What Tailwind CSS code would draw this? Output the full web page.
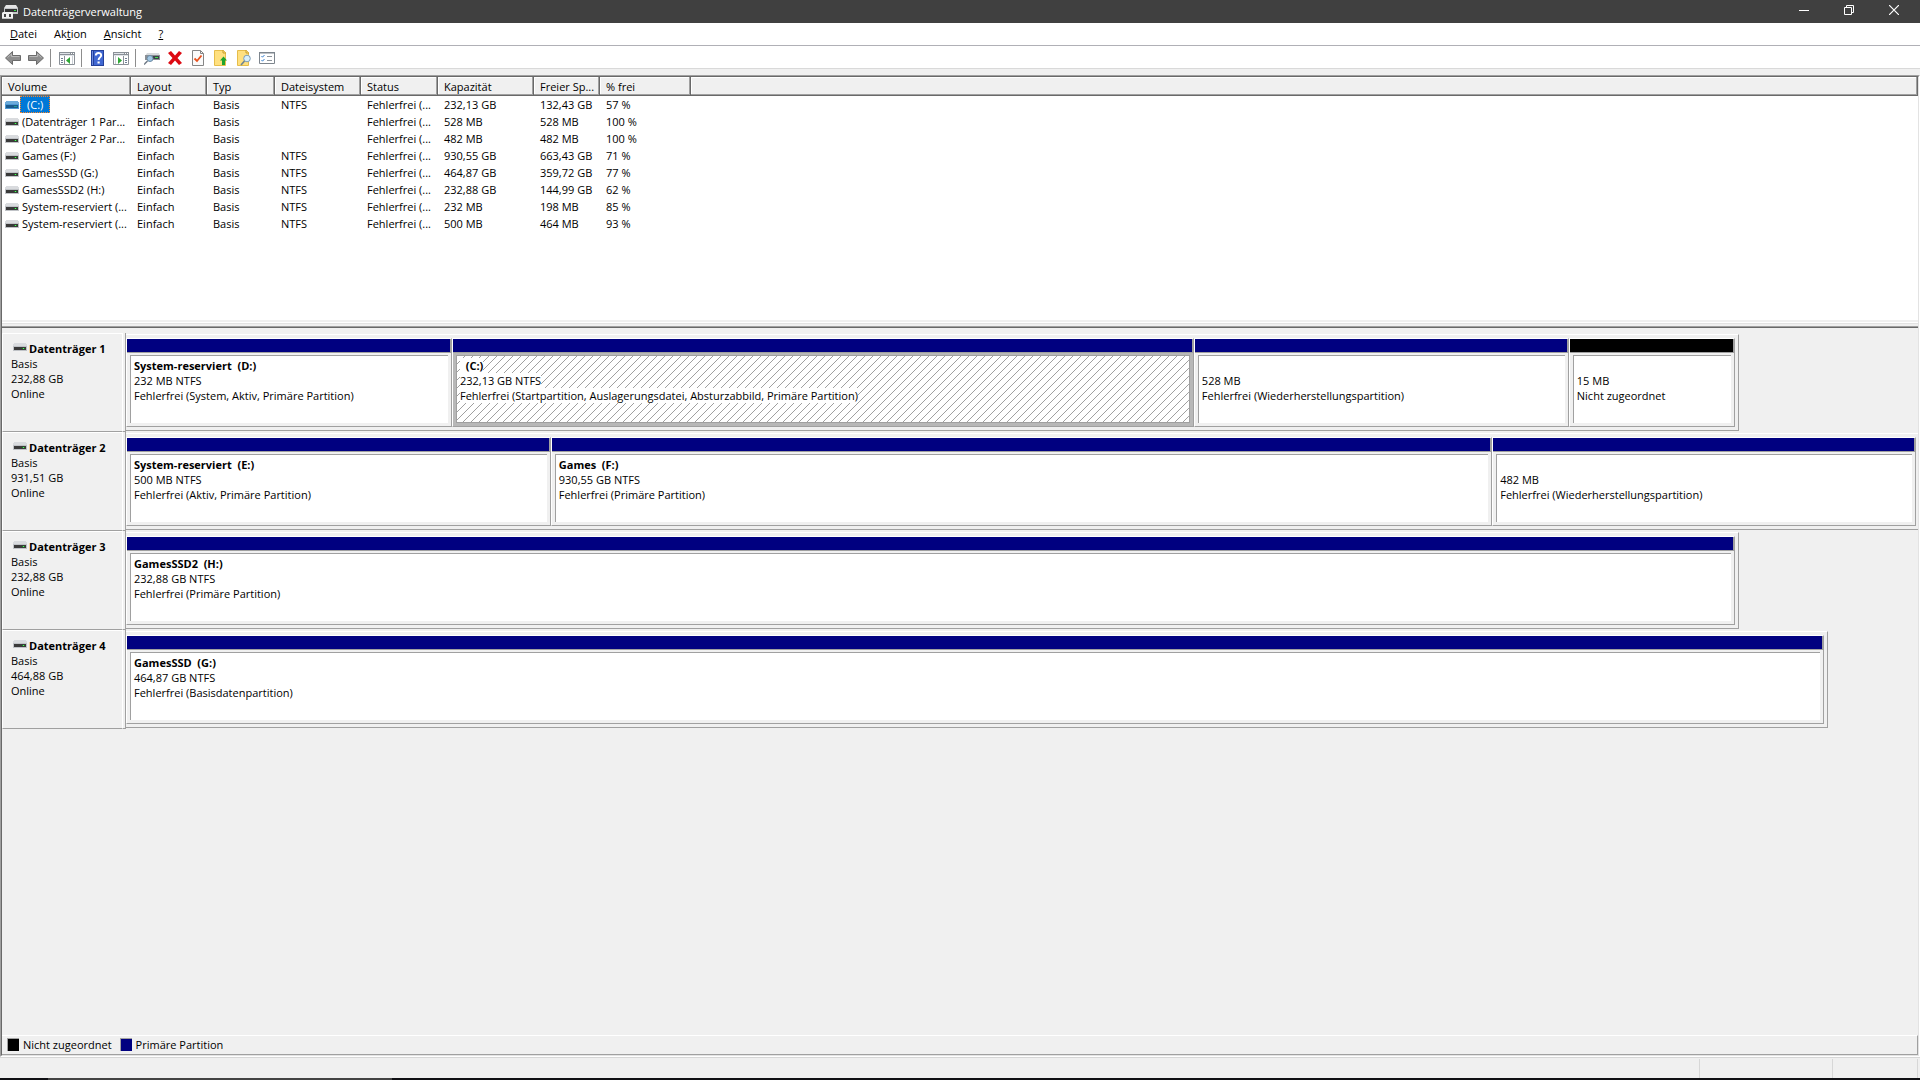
<!DOCTYPE html>
<html lang="de">
<head>
  <meta charset="UTF-8" />
  <meta name="viewport" content="width=device-width, initial-scale=1.0" />
  <script src="https://cdn.jsdelivr.net/npm/@tailwindcss/browser@4"></script>
  <title>Datenträgerverwaltung</title>
</head>
<body class="flex flex-col h-screen overflow-hidden bg-[#f0f0f0] font-['Open_Sans','Noto_Sans',sans-serif] text-[11px] leading-[15px] text-black">

  <!-- Shared drive icons -->
  <svg class="hidden">
    <symbol id="drive" viewBox="0 0 14 8">
      <path d="M1 0h12v1h1v3H0V1h1z" fill="#d9dbde" />
      <rect y="3" width="14" height="5" fill="#c0c3c7" />
      <rect x="1" y="4" width="12" height="3" fill="#3a3a3a" />
      <rect x="9" y="5" width="3" height="1" fill="#1f7a28" />
      <rect x="10" y="5" width="1" height="1" fill="#4dff5e" />
    </symbol>
    <symbol id="drive-selected" viewBox="0 0 14 8">
      <path d="M1 0h12v1h1v3H0V1h1z" fill="#6cabdb" />
      <rect y="3" width="14" height="5" fill="#4f9ad4" />
      <rect x="1" y="4" width="12" height="3" fill="#1c5a8c" />
      <rect x="9" y="5" width="3" height="1" fill="#1fa08f" />
    </symbol>
  </svg>

  <!-- Title bar -->
  <header class="flex items-center h-[23px] shrink-0 bg-[#404040] text-white pl-[2px] pr-1">
    <svg class="w-4 h-4 shrink-0" viewBox="0 0 16 16">
      <path d="M4 1h10l2 3H2z" fill="#e4e4e4" />
      <rect x="2" y="4" width="14" height="6" fill="#c4c6c8" />
      <rect x="3" y="5" width="12" height="3" fill="#333" />
      <rect x="12" y="6" width="2" height="1" fill="#35e04a" />
      <path d="M1 8h9l1 1v6H0V9z" fill="#f0f0f0" />
      <rect x="2" y="10" width="2" height="3" fill="#444" />
      <rect x="7" y="10" width="2" height="3" fill="#444" />
      <rect x="0" y="14" width="11" height="1" fill="#c0c0c0" />
    </svg>
    <h1 class="ml-[5px] flex-1">Datenträgerverwaltung</h1>
    <button aria-label="Minimieren" class="w-[45px] h-full flex justify-center pt-[5px]">
      <svg class="w-[10px] h-[10px]" viewBox="0 0 10 10"><rect y="5" width="10" height="1" fill="#fff" /></svg>
    </button>
    <button aria-label="Verkleinern" class="w-[45px] h-full flex justify-center pt-[5px]">
      <svg class="w-[10px] h-[10px]" viewBox="0 0 10 10" fill="none" stroke="#fff"><path d="M.5 2.500h7v7h-7zM2.500 2.500v-2h7v7h-2" /></svg>
    </button>
    <button aria-label="Schließen" class="w-[45px] h-full flex justify-center pt-[5px]">
      <svg class="w-[10px] h-[10px]" viewBox="0 0 10 10" fill="none" stroke="#fff" stroke-width="1.200"><path d="M0 0l10 10M10 0L0 10" /></svg>
    </button>
  </header>

  <!-- Menu -->
  <nav class="flex items-start gap-px h-[23px] shrink-0 bg-white border-b border-[#b0b0b6] pl-[2px] pt-[3px]">
    <button class="px-2"><u>D</u>atei</button>
    <button class="px-2">Ak<u>t</u>ion</button>
    <button class="px-2"><u>A</u>nsicht</button>
    <button class="px-2"><u>?</u></button>
  </nav>

  <!-- Toolbar -->
  <div role="toolbar" class="flex items-center h-[23px] shrink-0 bg-white border-b border-[#d9d9d9] pl-px pt-[2px] [&>button]:w-[23px] [&>button]:flex [&>button]:justify-center [&_svg]:w-4 [&_svg]:h-4">
    <button aria-label="Zurück">
      <svg viewBox="0 0 16 16"><path d="M.5 8L7.500 1.500v4h8v5h-8v4z" fill="#8e8e8e" stroke="#6b6b6b" /><path d="M2.500 7.500L6.500 4v2.500h8" fill="none" stroke="#b9b9b9" /></svg>
    </button>
    <button aria-label="Vorwärts">
      <svg viewBox="0 0 16 16"><path d="M15.500 8L8.500 1.500v4h-8v5h8v4z" fill="#8e8e8e" stroke="#6b6b6b" /><path d="M13.500 7.500L9.500 4v2.500h-8" fill="none" stroke="#b9b9b9" /></svg>
    </button>
    <div class="w-px h-[18px] bg-[#8d8d8d] ml-[3px] mr-1"></div>
    <button aria-label="Konsolenstruktur ein-/ausblenden">
      <svg viewBox="0 0 16 16"><path d="M.5 2.500h15v12H.5z" fill="#fff" stroke="#8a9097" /><path d="M0 2h16v4H0z" fill="#8a9097" /><path d="M1 3h10v1H1zM1 5h14v1H1z" fill="#dfe3e8" /><path d="M12 3h1v1h-1zM14 3h1v1h-1z" fill="#fff" /><path d="M5.500 6v9" stroke="#8a9097" /><path d="M2 8.500h2M2 10.500h2M2 12.500h2" stroke="#6e7f94" /><path d="M11 7v7L7 10.500z" fill="#2fa836" /><path d="M13.500 6v8" stroke="#c9ced4" /></svg>
    </button>
    <div class="w-px h-[18px] bg-[#8d8d8d] ml-[3px] mr-1"></div>
    <button aria-label="Hilfe">
      <svg viewBox="0 0 16 16"><rect x="1" width="13" height="16" fill="#24409a" /><rect x="4" y="1" width="9" height="14" fill="#4067d2" /><path d="M2.500 1v14" stroke="#6d8be0" /><path d="M5.800 5.500C5.800 2.200 11.200 2.200 11.200 5.300 11.200 7.400 8.600 7.500 8.600 10" fill="none" stroke="#fff" stroke-width="1.900" /><rect x="7.500" y="11.500" width="2.200" height="2" fill="#fff" /></svg>
    </button>
    <button aria-label="Aktionsbereich ein-/ausblenden">
      <svg viewBox="0 0 16 16"><path d="M.5 2.500h15v12H.5z" fill="#fff" stroke="#8a9097" /><path d="M0 2h16v4H0z" fill="#8a9097" /><path d="M1 3h10v1H1zM1 5h14v1H1z" fill="#dfe3e8" /><path d="M12 3h1v1h-1zM14 3h1v1h-1z" fill="#fff" /><path d="M10.500 6v9" stroke="#8a9097" /><path d="M12 8.500h2M12 10.500h2M12 12.500h2" stroke="#6e7f94" /><path d="M5 7v7l4-3.500z" fill="#2fa836" /><path d="M2.500 6v8" stroke="#c9ced4" /></svg>
    </button>
    <div class="w-px h-[18px] bg-[#8d8d8d] ml-[3px] mr-1"></div>
    <button aria-label="Datenträger neu einlesen">
      <svg viewBox="0 0 16 16"><path d="M3 3h12l1 3H1z" fill="#d8dbde" /><rect x="1" y="5" width="15" height="5" fill="#8b9095" /><rect x="8" y="6" width="7" height="3" fill="#3c4248" /><rect x="11" y="7" width="3" height="1" fill="#3fe04f" /><circle cx="6" cy="8.500" r="3" fill="#9fc6e4" stroke="#6c8aa3" /><path d="M3.500 11L0 14.500" stroke="#6b7683" stroke-width="1.500" /></svg>
    </button>
    <button aria-label="Löschen">
      <svg viewBox="0 0 16 16"><path d="M1 3l3-2 4 4.500L12 1l3 2-4.500 5 4.500 5-3 2-4-4.500L4 15l-3-2 4.500-5z" fill="#dd0a12" /></svg>
    </button>
    <button aria-label="Eigenschaften">
      <svg viewBox="0 0 16 16"><path d="M2.500.5h8l3 3v12h-11z" fill="#fafafa" stroke="#858585" /><path d="M10.500.5v3h3" fill="none" stroke="#858585" /><path d="M4.500 8.500L7 11l4.500-5.500" fill="none" stroke="#e8501c" stroke-width="1.800" /></svg>
    </button>
    <button aria-label="Virtuelle Festplatte anfügen">
      <svg viewBox="0 0 16 16"><path d="M1.500.5h9l2 2v13h-11z" fill="#ffe07f" stroke="#e6bd4a" /><path d="M10 0v3h3" fill="none" stroke="#c79d2c" /><path d="M10.500 6.500l3.500 4h-2V15H9v-4.500H7z" fill="#1ea52c" /></svg>
    </button>
    <button aria-label="Suchen">
      <svg viewBox="0 0 16 16"><path d="M1.500.5h9l2 2v13h-11z" fill="#ffe07f" stroke="#e6bd4a" /><path d="M10 0v3h3" fill="none" stroke="#c79d2c" /><circle cx="11" cy="8.500" r="3.300" fill="#d8effb" stroke="#7d9db5" /><path d="M8.500 11L5 15" stroke="#6f8593" stroke-width="1.600" /></svg>
    </button>
    <button aria-label="Einstellungen">
      <svg viewBox="0 0 16 16"><path d="M.5 2.500h15v11H.5z" fill="#fff" stroke="#7d858d" /><path d="M0 2h16v1.500H0z" fill="#7d858d" /><path d="M2.500 6l1 1.200L5.500 5M2.500 10l1 1.200L5.500 9" fill="none" stroke="#3c82cf" /><path d="M8 6.500h5M8 10.500h5" stroke="#8d949b" /></svg>
    </button>
  </div>

  <!-- Sunken frame with volume list, disk view and legend -->
  <main class="flex flex-col flex-1 min-h-0 mt-[6px] border border-t-[#a0a0a0] border-l-[#a0a0a0] border-r-white border-b-white">
    <div class="flex flex-col flex-1 min-h-0 border border-t-[#696969] border-l-[#696969] border-r-[#e3e3e3] border-b-[#e3e3e3]">

      <section class="h-[243px] shrink-0 bg-white overflow-hidden">
        <table class="w-full table-fixed border-collapse text-left whitespace-nowrap">
          <colgroup>
            <col class="w-[129px]" /><col class="w-[76px]" /><col class="w-[68px]" /><col class="w-[86px]" />
            <col class="w-[77px]" /><col class="w-[96px]" /><col class="w-[66px]" /><col class="w-[91px]" /><col />
          </colgroup>
          <thead>
            <tr class="h-[19px] bg-[#f0f0f0] [&>th]:px-[6px] [&>th]:py-0 [&>th]:font-normal [&>th]:shadow-[inset_-1px_-1px_#696969,inset_-2px_-2px_#a0a0a0,inset_1px_1px_#fff]">
              <th>Volume</th><th>Layout</th><th>Typ</th><th>Dateisystem</th><th>Status</th><th>Kapazität</th><th>Freier Sp...</th><th>% frei</th><th></th>
            </tr>
          </thead>
          <tbody id="volumes"></tbody>
        </table>
      </section>

      <div class="h-2 shrink-0 flex flex-col justify-between cursor-row-resize">
        <div class="mt-[2px] h-[2px] bg-[#e3e3e3] border-t border-white"></div>
        <div class="h-[2px] bg-[#696969] border-t border-[#a0a0a0]"></div>
      </div>

      <section id="disks" class="flex-1 min-h-0 pt-[5px]"></section>

      <footer class="flex items-center h-5 shrink-0 border-t border-t-white border-b border-b-[#a0a0a0] border-r border-r-[#a0a0a0] pl-[5px] pb-px">
        <span class="w-3 h-[13px] bg-black border-t border-l border-[#a0a0a0] mr-1"></span>
        <span class="mr-2">Nicht zugeordnet</span>
        <span class="w-3 h-[13px] bg-[#000080] border-t border-l border-[#a0a0a0] mr-1"></span>
        <span>Primäre Partition</span>
      </footer>
    </div>
  </main>

  <!-- Status bar -->
  <div class="flex h-[21px] shrink-0 border-t border-[#d7d7d7] pt-px pr-[2px]">
    <div class="flex-1 border-r border-[#d7d7d7]"></div>
    <div class="w-[133px] border-r border-[#d7d7d7]"></div>
    <div class="w-[85px] border-r border-[#d7d7d7]"></div>
  </div>
  <div class="flex h-[2px] shrink-0 bg-[#101014]">
    <div class="ml-12 w-[344px] bg-[#444]"></div>
  </div>

  <script>
    const volumes = [
      ['(C:)', 'NTFS', '232,13 GB', '132,43 GB', '57 %'],
      ['(Datenträger 1 Par...', '', '528 MB', '528 MB', '100 %'],
      ['(Datenträger 2 Par...', '', '482 MB', '482 MB', '100 %'],
      ['Games (F:)', 'NTFS', '930,55 GB', '663,43 GB', '71 %'],
      ['GamesSSD (G:)', 'NTFS', '464,87 GB', '359,72 GB', '77 %'],
      ['GamesSSD2 (H:)', 'NTFS', '232,88 GB', '144,99 GB', '62 %'],
      ['System-reserviert (...', 'NTFS', '232 MB', '198 MB', '85 %'],
      ['System-reserviert (...', 'NTFS', '500 MB', '464 MB', '93 %'],
    ];

    // share: width of the disk in percent, size: relative width of a partition
    const disks = [
      { name: 'Datenträger 1', capacity: '232,88 GB', share: 90, parts: [
        { size: 324, title: 'System-reserviert&nbsp; (D:)', info: '232 MB NTFS', state: 'Fehlerfrei (System, Aktiv, Primäre Partition)' },
        { size: 740, title: '&nbsp; (C:)', info: '232,13 GB NTFS', state: 'Fehlerfrei (Startpartition, Auslagerungsdatei, Absturzabbild, Primäre Partition)', selected: true },
        { size: 373, title: '', info: '528 MB', state: 'Fehlerfrei (Wiederherstellungspartition)' },
        { size: 164, title: '', info: '15 MB', state: 'Nicht zugeordnet', free: true },
      ]},
      { name: 'Datenträger 2', capacity: '931,51 GB', share: 100, parts: [
        { size: 423, title: 'System-reserviert&nbsp; (E:)', info: '500 MB NTFS', state: 'Fehlerfrei (Aktiv, Primäre Partition)' },
        { size: 940, title: 'Games&nbsp; (F:)', info: '930,55 GB NTFS', state: 'Fehlerfrei (Primäre Partition)' },
        { size: 422, title: '', info: '482 MB', state: 'Fehlerfrei (Wiederherstellungspartition)' },
      ]},
      { name: 'Datenträger 3', capacity: '232,88 GB', share: 90, parts: [
        { size: 1, title: 'GamesSSD2&nbsp; (H:)', info: '232,88 GB NTFS', state: 'Fehlerfrei (Primäre Partition)' },
      ]},
      { name: 'Datenträger 4', capacity: '464,88 GB', share: 95, parts: [
        { size: 1, title: 'GamesSSD&nbsp; (G:)', info: '464,87 GB NTFS', state: 'Fehlerfrei (Basisdatenpartition)' },
      ]},
    ];

    document.getElementById('volumes').innerHTML = volumes.map(([name, fs, size, free, percent], i) => `
      <tr class="h-[17px] [&>td]:px-[6px] [&>td]:py-0">
        <td>
          <div class="flex items-center -ml-[3px] -mr-[6px] h-[17px]">
            <svg class="w-[14px] h-2 shrink-0"><use href="${i === 0 ? '#drive-selected' : '#drive'}" /></svg>
            <span class="${i === 0 ? 'ml-px px-[6px] bg-[#0078d7] text-white border border-dotted border-[#ff8728]' : 'ml-[3px]'}">${name}</span>
          </div>
        </td>
        <td>Einfach</td><td>Basis</td><td>${fs}</td><td>Fehlerfrei (...</td><td>${size}</td><td>${free}</td><td>${percent}</td><td></td>
      </tr>`).join('');

    const hatch = `
      <svg class="absolute inset-0 w-full h-full">
        <pattern id="hatch" width="8" height="8" patternUnits="userSpaceOnUse">
          <path d="M-1 9L9 -1" stroke="#a0a0a0" shape-rendering="crispEdges" />
        </pattern>
        <rect width="100%" height="100%" fill="url(#hatch)" />
      </svg>`;

    const partition = (p) => `
      <div class="flex flex-col min-w-0 basis-0 border-t border-l border-t-white border-l-white border-r border-b border-r-[#a0a0a0] border-b-[#a0a0a0] ${p.selected ? 'bg-[#b8b8b8]' : ''}" style="flex-grow: ${p.size}">
        <div class="h-[14px] border-b border-r border-[#a0a0a0] ${p.free ? 'bg-black' : 'bg-[#000080]'}"></div>
        <div class="relative flex-1 mt-[2px] mx-[3px] mb-[3px] bg-white border-[#a0a0a0] ${p.selected ? 'border' : 'border-t border-l'} pt-[2px] pl-[3px] whitespace-nowrap overflow-hidden">
          ${p.selected ? hatch : ''}
          <div class="relative w-fit h-[15px] bg-white font-bold">${p.title}</div>
          <div class="relative w-fit bg-white">${p.info}</div>
          <div class="relative w-fit bg-white">${p.state}</div>
        </div>
      </div>`;

    document.getElementById('disks').innerHTML = disks.map((d) => `
      <div class="flex h-[99px]">
        <div class="w-[121px] shrink-0 border border-white border-b-[#a0a0a0] pt-[7px] pl-2">
          <div class="flex font-bold pl-[2px]">
            <svg class="w-[14px] h-2 shrink-0 mt-[2px] mr-[2px]"><use href="#drive" /></svg>${d.name}
          </div>
          <div>Basis</div>
          <div>${d.capacity}</div>
          <div>Online</div>
        </div>
        <div class="w-[2px] shrink-0 border-b border-[#a0a0a0]"></div>
        <div class="flex-1 border-l border-[#a0a0a0] pt-px pb-px">
          <div class="flex h-full pt-[3px] pb-[3px] border-t border-t-white border-b border-b-[#a0a0a0] border-r-[#a0a0a0] ${d.share < 100 ? 'border-r pr-[3px]' : 'pr-[2px]'}" style="width: ${d.share}%">
            ${d.parts.map(partition).join('')}
          </div>
        </div>
      </div>`).join('');
  </script>
</body>
</html>
